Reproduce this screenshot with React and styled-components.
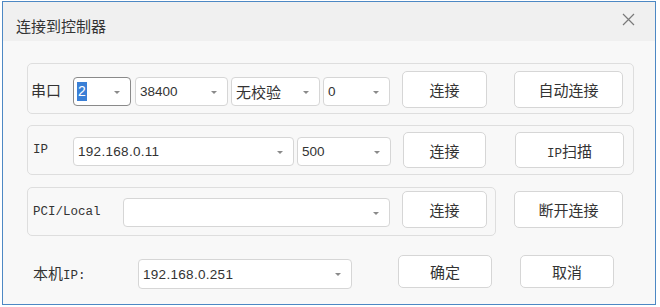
import React from 'react';
import styled, { createGlobalStyle } from 'styled-components';

const GlobalStyle = createGlobalStyle`
  body {
    margin: 0;
    background: #ffffff;
    font-family: "Noto Sans CJK SC", "Noto Sans", sans-serif;
  }
`;

const cjk = `"Noto Sans CJK SC", "Noto Sans", sans-serif`;
const mono = `"Liberation Mono", "Noto Sans CJK SC", monospace`;

const Window = styled.div`
  margin: 1px 0 0 2px;
  width: 652px;
  height: 302px;
  border: 1px solid #4d88c4;
  background: #f8f8f8;
  display: flex;
  flex-direction: column;
`;

const TitleBar = styled.div`
  height: 39px;
  background: #f0f0f0;
  display: flex;
  align-items: center;
  justify-content: space-between;
  padding: 0 20px 0 13px;
  flex-shrink: 0;
`;

const Title = styled.span`
  font-family: ${cjk};
  font-size: 15px;
  color: #333;
  margin-top: 7px;
`;

const Close = styled.svg`
  width: 13px;
  height: 13px;
  margin-top: -5px;
`;

const Content = styled.div`
  display: flex;
  flex-direction: column;
  padding: 22px 0 0 24px;
`;

const Row = styled.div`
  display: flex;
  align-items: center;
  margin-top: ${(p) => p.$gap || 0}px;
`;

const Group = styled.div`
  width: ${(p) => p.$width}px;
  height: ${(p) => p.$height}px;
  box-sizing: border-box;
  border: 1px solid #dedede;
  border-radius: 5px;
  display: flex;
  align-items: center;
  padding-left: ${(p) => p.$pad || 3}px;
`;

const Label = styled.span`
  width: ${(p) => p.$width}px;
  box-sizing: border-box;
  padding-left: ${(p) => p.$pad || 0}px;
  flex-shrink: 0;
  font-family: ${(p) => (p.$mono ? mono : cjk)};
  font-size: ${(p) => (p.$mono ? '12.5px' : '15px')};
  color: #333;
  margin-top: ${(p) => p.$offset || 0}px;
`;

const Mono = styled.span`
  font-family: ${mono};
  font-size: 12.5px;
`;

const SelectBox = styled.div`
  position: relative;
  width: ${(p) => p.$width}px;
  height: ${(p) => p.$height || 29}px;
  margin-left: ${(p) => p.$gap || 0}px;
  margin-top: ${(p) => p.$offset || 0}px;
  box-sizing: border-box;
  background: #fff;
  border: 1px solid ${(p) => (p.$focus ? '#8a8a8a' : '#d6d6d6')};
  border-radius: 4px;
  display: flex;
  align-items: center;
  padding-left: ${(p) => (p.$focus ? 3 : 4)}px;
  flex-shrink: 0;
`;

const Value = styled.span`
  font-family: ${(p) => (p.$cjk ? cjk : `"Liberation Sans", "Noto Sans CJK SC", sans-serif`)};
  font-size: ${(p) => (p.$cjk ? '15px' : '13.5px')};
  color: #333;
  letter-spacing: ${(p) => p.$spacing || 0}px;
`;

const Selected = styled.span`
  font-family: "Liberation Sans", sans-serif;
  font-size: 14px;
  background: #3a7fd6;
  color: #fff;
  padding: 0 1px;
  line-height: 19px;
`;

const Arrow = styled.span`
  position: absolute;
  right: 10px;
  top: 50%;
  margin-top: -1px;
  width: 0;
  height: 0;
  border-left: 3px solid transparent;
  border-right: 3px solid transparent;
  border-top: 3px solid #8a8a8a;
`;

const Button = styled.button`
  width: ${(p) => p.$width}px;
  height: ${(p) => p.$height || 37}px;
  margin-left: ${(p) => p.$gap || 0}px;
  margin-top: ${(p) => p.$offset || 0}px;
  box-sizing: border-box;
  background: #fff;
  border: 1px solid #d6d6d6;
  border-radius: 5px;
  font-family: ${cjk};
  font-size: 15px;
  color: #333;
  padding: 0;
  flex-shrink: 0;
`;

const Select = ({ children, ...rest }) => (
  <SelectBox {...rest}>
    {children}
    <Arrow />
  </SelectBox>
);

export default function App() {
  return (
    <>
      <GlobalStyle />
      <Window>
        <TitleBar>
          <Title>连接到控制器</Title>
          <Close viewBox="0 0 13 13">
            <path d="M1 1 L12 12 M12 1 L1 12" stroke="#7a7a7a" strokeWidth="1.2" fill="none" />
          </Close>
        </TitleBar>
        <Content>
          <Row>
            <Group $width={607} $height={51} $pad={3}>
              <Label $width={42} $offset={1}>串口</Label>
              <Select $width={58} $focus $offset={6}>
                <Selected>2</Selected>
              </Select>
              <Select $width={93} $gap={4} $offset={6}>
                <Value>38400</Value>
              </Select>
              <Select $width={89} $gap={3} $offset={6}>
                <Value $cjk>无校验</Value>
              </Select>
              <Select $width={67} $gap={3} $offset={6}>
                <Value>0</Value>
              </Select>
              <Button $width={85} $gap={12} $offset={2}>连接</Button>
              <Button $width={109} $gap={27} $offset={2}>自动连接</Button>
            </Group>
          </Row>
          <Row $gap={11}>
            <Group $width={607} $height={50} $pad={5}>
              <Label $width={40} $mono>IP</Label>
              <Select $width={221} $height={29} $offset={3}>
                <Value $spacing={0.3}>192.168.0.11</Value>
              </Select>
              <Select $width={94} $gap={3} $height={29} $offset={3}>
                <Value>500</Value>
              </Select>
              <Button $width={83} $gap={12} $height={36}>连接</Button>
              <Button $width={109} $gap={29} $height={36}>
                <Mono>IP</Mono>扫描
              </Button>
            </Group>
          </Row>
          <Row $gap={12}>
            <Group $width={469} $height={49} $pad={5}>
              <Label $width={90} $mono>PCI/Local</Label>
              <Select $width={267} $height={29} $offset={2}>
                <Value> </Value>
              </Select>
              <Button $width={85} $gap={12} $offset={-4}>连接</Button>
            </Group>
            <Button $width={109} $gap={18} $offset={-4}>断开连接</Button>
          </Row>
          <Row $gap={11}>
            <Label $width={111} $pad={6} $offset={8}>
              本机<Mono>IP:</Mono>
            </Label>
            <Select $width={214} $height={30} $offset={12}>
              <Value $spacing={0.3}>192.168.0.251</Value>
            </Select>
            <Button $width={94} $gap={46} $height={33} $offset={6}>确定</Button>
            <Button $width={94} $gap={28} $height={33} $offset={6}>取消</Button>
          </Row>
        </Content>
      </Window>
    </>
  );
}
